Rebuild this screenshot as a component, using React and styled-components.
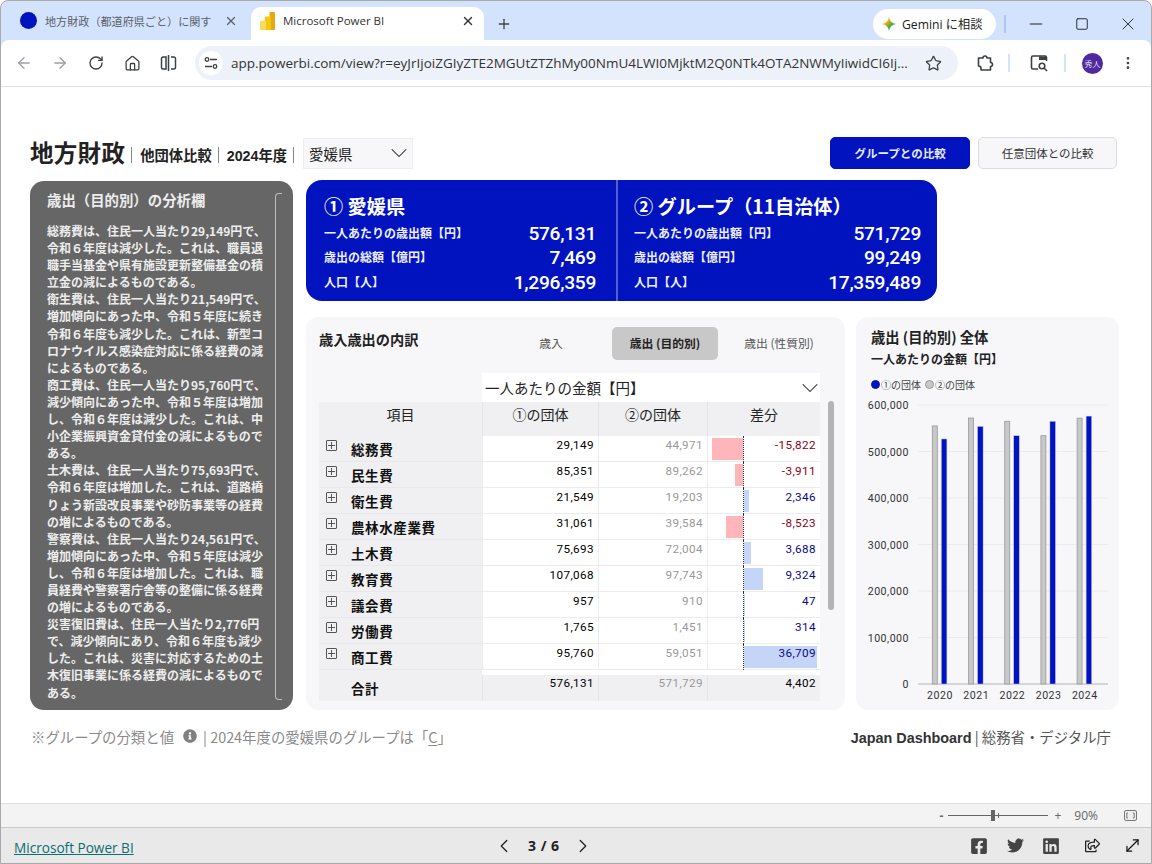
import React from "react"
import styled, { createGlobalStyle } from "styled-components"
import {
  ArrowLeft, ArrowRight, RotateCw, Home, Star, X, Plus, Minus, Square,
  ChevronDown, ChevronLeft, ChevronRight, MoveDiagonal, EllipsisVertical,
} from "lucide-react"
import { FaFacebookSquare, FaTwitter, FaLinkedin, FaRegShareSquare, FaInfoCircle } from "react-icons/fa"

const jp = `"Noto Sans CJK JP", sans-serif`
const num = `Roboto, "Noto Sans CJK JP", sans-serif`
const blue = "#0013be"

const GlobalStyle = createGlobalStyle`
  html, body { margin: 0; padding: 0; background: #fff; }
  * { box-sizing: border-box; }
  body { font-family: ${jp}; }
`

const analysis = [
  "総務費は、住民一人当たり29,149円で、", "令和６年度は減少した。これは、職員退", "職手当基金や県有施設更新整備基金の積", "立金の減によるものである。",
  "衛生費は、住民一人当たり21,549円で、", "増加傾向にあった中、令和５年度に続き", "令和６年度も減少した。これは、新型コ", "ロナウイルス感染症対応に係る経費の減", "によるものである。",
  "商工費は、住民一人当たり95,760円で、", "減少傾向にあった中、令和５年度は増加", "し、令和６年度は減少した。これは、中", "小企業振興資金貸付金の減によるもので", "ある。",
  "土木費は、住民一人当たり75,693円で、", "令和６年度は増加した。これは、道路橋", "りょう新設改良事業や砂防事業等の経費", "の増によるものである。",
  "警察費は、住民一人当たり24,561円で、", "増加傾向にあった中、令和５年度は減少", "し、令和６年度は増加した。これは、職", "員経費や警察署庁舎等の整備に係る経費", "の増によるものである。",
  "災害復旧費は、住民一人当たり2,776円", "で、減少傾向にあり、令和６年度も減少", "した。これは、災害に対応するための土", "木復旧事業に係る経費の減によるもので", "ある。",
]

const rows = [
  ["総務費", "29,149", "44,971", -15822],
  ["民生費", "85,351", "89,262", -3911],
  ["衛生費", "21,549", "19,203", 2346],
  ["農林水産業費", "31,061", "39,584", -8523],
  ["土木費", "75,693", "72,004", 3688],
  ["教育費", "107,068", "97,743", 9324],
  ["議会費", "957", "910", 47],
  ["労働費", "1,765", "1,451", 314],
  ["商工費", "95,760", "59,051", 36709],
]

const years = [
  [2020, 555000, 527000],
  [2021, 572000, 554000],
  [2022, 565000, 534000],
  [2023, 534000, 565000],
  [2024, 571729, 576131],
]

const Frame = styled.div`
  width: 1152px; height: 864px; display: flex; flex-direction: column; overflow: hidden;
  background: #d3e3fd; border: 1px solid #a9a9a9; border-radius: 8px 8px 0 0;
`
const TabStrip = styled.div`
  height: 39px; flex: none; display: flex; align-items: flex-end; padding-left: 7px;
`
const Tab = styled.div`
  height: 33px; display: flex; align-items: center; flex: none;
  width: ${p => p.$w}px; padding: 0 ${p => p.$active ? 9 : 13}px 6px ${p => p.$active ? 9 : 12}px;
  border-radius: 10px 10px 0 0; background: ${p => p.$active ? "#fff" : "transparent"};
  font-size: ${p => p.$active ? 11.5 : 11.1}px; color: ${p => p.$active ? "#333" : "#5a5f66"};
`
const TabDot = styled.span`
  width: 17px; height: 17px; border-radius: 50%; background: ${blue}; flex: none; margin-right: 8px;
`
const TabTitle = styled.span`
  flex: 1; white-space: nowrap; overflow: hidden; margin-left: ${p => p.$gap || 0}px; font-family: ${p => p.$latin ? `"Open Sans", sans-serif` : jp};
`
const NewTab = styled.span`
  margin: 0 0 8px 12px; color: #444; display: flex;
`
const TabEnd = styled.div`
  margin-left: auto; display: flex; align-items: center; height: 39px; padding-top: 6px; color: #222;
`
const GeminiPill = styled.div`
  width: 123px; height: 30px; border-radius: 15px; background: #fff; display: flex; align-items: center;
  gap: 6px; padding-left: 9px; font-size: 12.2px; color: #222; font-family: "Open Sans", ${jp};
`
const StripDivider = styled.span`
  width: 2px; height: 18px; background: #a9c7f5; margin: 0 7px 0 8px;
`
const WinButton = styled.span`
  width: 46px; display: flex; justify-content: center;
`
const Toolbar = styled.div`
  height: 47px; flex: none; background: #fff; border-radius: 8px 8px 0 0; border-bottom: 1px solid #dfe1e5;
  display: flex; align-items: center; padding-left: 5px;
`
const NavIcon = styled.span`
  width: 36px; display: flex; justify-content: center; flex: none; margin-left: ${p => p.$ml || 0}px;
  color: ${p => p.$off ? "#9aa0a6" : "#3c4043"};
`
const Omnibox = styled.div`
  width: 763px; height: 34px; margin: 0 9px 0 9px; border-radius: 17px; background: #edf2fa; flex: none;
  display: flex; align-items: center; padding: 0 16px 0 4px; font: 13.5px "Open Sans", sans-serif; color: #333;
`
const SiteChip = styled.span`
  width: 24px; height: 24px; border-radius: 50%; background: #fff; display: flex; align-items: center; justify-content: center; margin-right: 8px; flex: none;
`
const Url = styled.span`
  flex: 1; white-space: nowrap; overflow: hidden;
`
const ToolDivider = styled.span`
  width: 2px; height: 18px; background: #d3e3fd; flex: none; margin: 0 ${p => p.$m}px;
`
const Avatar = styled.span`
  width: 21px; height: 21px; border-radius: 50%; background: #4f2a9e; color: #e6e0f5; font-size: 8px; flex: none;
  display: flex; align-items: center; justify-content: center; margin: 0 17px 0 9px;
`

const Report = styled.main`
  flex: 1; background: #fff; padding: 50px 33px 0 29px; min-height: 0;
`
const ReportHead = styled.header`
  height: 32px; display: flex; align-items: center; margin-bottom: 11px;
`
const ReportTitle = styled.h1`
  margin: 0; font-size: 23.5px; font-weight: 700; color: #222; line-height: 1; letter-spacing: .3px;
`
const HeadSep = styled.span`
  width: 1px; height: 16px; background: #888; margin: 3px ${p => p.$r || 8}px 0 6px; flex: none;
`
const HeadLabel = styled.span`
  font-size: 14.3px; font-weight: 700; color: #222; margin-top: 3px; font-family: ${p => p.$num ? `"Liberation Sans", ${jp}` : jp};
`
const Select = styled.div`
  height: 31px; background: #f7f7fa; border: 1px solid #eeeef1; display: flex; align-items: center; justify-content: space-between;
  width: 110px; padding: 0 5px; font-size: 14.5px; color: #222;
`
const DropChevron = styled(ChevronDown)`
  flex: none; margin-right: ${p => p.$mr}px;
`
const HeadButton = styled.button`
  width: ${p => p.$w}px; height: 32px; border-radius: 5px; font: ${p => p.$on ? 700 : 400} 11.5px ${jp};
  margin-left: ${p => p.$ml}px; cursor: pointer;
  background: ${p => p.$on ? blue : "#f7f7fa"}; color: ${p => p.$on ? "#e8eaff" : "#333"};
  border: 1px solid ${p => p.$on ? blue : "#dcdcdc"};
`

const Columns = styled.div`
  display: grid; grid-template-columns: 263px 813px; column-gap: 13px;
`
const AnalysisPanel = styled.aside`
  height: 529px; margin-top: 1px; background: #666; border-radius: 14px; padding: 9px 17px; position: relative; color: #ededed;
`
const AnalysisTitle = styled.h2`
  margin: 0 0 12px; font-size: 14.4px; font-weight: 700; line-height: 20px; white-space: nowrap;
`
const AnalysisLine = styled.div`
  font-size: 12px; font-weight: 700; line-height: 17.1px; white-space: nowrap;
`
const PanelScroll = styled.span`
  position: absolute; left: 245px; top: 12px; bottom: 10px; width: 7px; border: 1px solid #bdbdbd; border-right: none; border-radius: 4px 0 0 4px;
`
const RightColumn = styled.div`
  display: flex; flex-direction: column; gap: 16px;
`
const SummaryCard = styled.section`
  width: 631px; height: 121px; border-radius: 16px; background: ${blue}; display: flex; color: #fff;
`
const SummaryPart = styled.div`
  width: ${p => p.$w}px; padding: 12px ${p => p.$r}px 0 ${p => p.$sep ? 16 : 18}px; border-left: ${p => p.$sep ? "2px solid #5560cf" : "none"};
`
const SummaryTitle = styled.h2`
  margin: 0; font-size: 19.2px; font-weight: 700; line-height: 29px; white-space: nowrap;
`
const SummaryRow = styled.div`
  height: 24.5px; display: flex; align-items: center; justify-content: space-between;
`
const SummaryLabel = styled.span`
  font-size: 12px; font-weight: 700; color: #eef; margin-top: -2px;
`
const SummaryValue = styled.span`
  font: 500 19.2px ${num}; letter-spacing: -.3px;
`
const LowerRow = styled.div`
  display: flex; gap: 11px;
`
const BreakdownPanel = styled.section`
  width: 539px; height: 393px; background: #f7f7fa; border-radius: 12px; padding: 10px 13px; position: relative;
`
const BreakdownHead = styled.div`
  display: flex; height: 33px; margin-bottom: 13px;
`
const PanelTitle = styled.h3`
  margin: 0; font-size: 14.2px; font-weight: 700; color: #222; line-height: 24px; width: 171px; flex: none; white-space: nowrap;
`
const TabButton = styled.div`
  height: 33px; display: flex; align-items: center; justify-content: center; width: ${p => p.$w}px; flex: none; padding-bottom: 2px;
  border-radius: 5px; font-size: 11.8px; color: ${p => p.$on ? "#222" : "#555"}; font-weight: ${p => p.$on ? 700 : 400};
  background: ${p => p.$on ? "#c8c8c8" : "transparent"}; white-space: nowrap;
`
const MeasureSelect = styled.div`
  margin-left: 163px; width: 338px; height: 29px; background: #fff; display: flex; align-items: center; justify-content: space-between;
  padding: 0 3px; font-size: 14.5px; color: #222;
`
const TableGrid = styled.div`
  display: grid; grid-template-columns: 163px 116px 109px 113px;
`
const HeadCell = styled.div`
  height: 34px; background: #f0f0f3; font-size: 14px; color: #222; text-align: center; line-height: 25px;
  border-left: ${p => p.$first ? "none" : "1px solid #e4e4e8"}; white-space: nowrap;
`
const LabelCell = styled.div`
  height: 26px; background: #f0f0f3; border-bottom: 1px solid #e8e8ec; display: flex; align-items: flex-start; padding-left: 7px;
`
const Expander = styled.span`
  width: 11px; height: 11px; border: 1px solid #555; border-radius: 1px; margin: 4px 14px 0 0; position: relative; flex: none;
  &::before { content: ""; position: absolute; left: 1px; right: 1px; top: 4px; height: 1px; background: #555; }
  &::after { content: ""; position: absolute; top: 1px; bottom: 1px; left: 4px; width: 1px; background: #555; }
`
const LabelText = styled.span`
  font-size: 13.5px; font-weight: 700; color: #111; line-height: ${p => p.$total ? 20 : 27}px; letter-spacing: .6px; white-space: nowrap;
`
const NumCell = styled.div`
  height: 26px; background: #fff; border-bottom: 1px solid #ececef; border-left: 1px solid #ececef; position: relative;
  text-align: right; padding-right: 4px; font: 400 11.7px/19px ${num}; letter-spacing: .4px;
  color: ${p => p.$tone || "#000"};
`
const DiffBar = styled.span`
  position: absolute; top: 2px; bottom: 1px; background: ${p => p.$neg ? "#ffb6bb" : "#c4d5f8"};
`
const ZeroLine = styled.span`
  position: absolute; left: 35px; top: 0; bottom: -1px; border-left: 1px dotted #333;
`
const DiffText = styled.span`
  position: relative;
`
const Gap = styled.div`
  grid-column: 2 / 5; height: 5px; background: #fff;
`
const GapLabel = styled.div`
  height: 5px; background: #f0f0f3;
`
const TotalLabel = styled.div`
  height: 26px; background: #f0f0f3; padding-left: 32px;
`
const TotalCell = styled(NumCell)`
  background: #f0f0f3; border-bottom: none; border-left: 1px solid #e6e6ea; line-height: 17px;
`
const ScrollThumb = styled.span`
  position: absolute; left: 522px; top: 84px; width: 6px; height: 209px; border-radius: 3px; background: #b4b4b4;
`
const ChartPanel = styled.section`
  width: 263px; height: 393px; background: #f7f7fa; border-radius: 12px; padding: 10px 15px 0;
`
const ChartTitle = styled.h3`
  margin: 0; font-size: 14.3px; font-weight: 700; color: #222; line-height: 20px; white-space: nowrap;
`
const ChartSub = styled.div`
  font-size: 12px; font-weight: 700; color: #222; line-height: 24px; white-space: nowrap;
`
const Legend = styled.div`
  display: flex; align-items: center; font-size: 10px; color: #444; margin-top: 5px; height: 16px;
`
const LegendDot = styled.span`
  width: 9px; height: 9px; border-radius: 50%; background: ${p => p.$c}; border: 1px solid ${p => p.$b}; margin: 0 1px 0 ${p => p.$ml || 0}px; flex: none;
`
const ChartSvg = styled.svg`
  display: block; margin: 0 0 0 -15px;
`
const Foot = styled.footer`
  display: flex; justify-content: space-between; align-items: center; margin-top: 15px; height: 22px; padding-left: 1px;
`
const FootNote = styled.div`
  display: flex; align-items: center; font-size: 14.4px; color: #8a8a8a; white-space: pre;
`
const NoteIcon = styled.span`
  display: flex; margin: 0 6px 0 9px; color: #808080;
`
const Underlined = styled.u`
  text-underline-offset: 2px;
`
const FootOwner = styled.div`
  font-size: 14.4px; color: #555; padding-right: 7px; white-space: nowrap;
`
const OwnerName = styled.b`
  font: 700 14.4px "Liberation Sans", sans-serif; color: #333;
`
const ZoomBar = styled.div`
  height: 24px; flex: none; background: #f3f3f3; border-top: 1px solid #dedede; display: flex; align-items: center; justify-content: flex-end;
  font: 12px "Open Sans", sans-serif; color: #666; padding-right: 14px;
`
const SliderTrack = styled.span`
  width: 100px; height: 1px; background: #666; position: relative; margin: 0 6px 0 5px;
`
const SliderThumb = styled.span`
  position: absolute; left: 43px; top: -5px; width: 4px; height: 11px; background: #666;
`
const SliderTick = styled.span`
  position: absolute; left: 50px; top: -2px; width: 1px; height: 5px; background: #666;
`
const ZoomText = styled.span`
  margin: 0 26px 0 13px;
`
const BottomBar = styled.div`
  height: 36px; flex: none; background: #e9e9e9; border-top: 1px solid #c8c8c8; display: grid; grid-template-columns: 479px auto 1fr; align-items: center;
  padding: 0 2px 0 13px;
`
const BrandLink = styled.a`
  font: 13.6px "Open Sans", sans-serif; color: #0b6f70; text-decoration: underline;
`
const Pager = styled.div`
  display: flex; align-items: center; gap: 13px; font: 700 14px "Open Sans", sans-serif; color: #222; word-spacing: 1px;
`
const ShareIcons = styled.div`
  display: flex; align-items: center; justify-content: flex-end; color: #444;
`
const ShareIcon = styled.span`
  width: ${p => p.$w || 36}px; display: flex; justify-content: center; color: ${p => p.$c || "#444"};
`

const PowerBiLogo = () => (
  <svg width="15" height="18" viewBox="0 0 15 18" style={{ flex: "none" }}>
    <rect x="9.5" y="0" width="5.5" height="18" rx="1" fill="#e8a80f" />
    <rect x="4.8" y="4.5" width="6" height="13.5" rx="1" fill="#f2c811" />
    <rect x="0" y="9" width="6" height="9" rx="1" fill="#f9dc5c" />
  </svg>
)

const GeminiIcon = () => (
  <svg width="14" height="14" viewBox="0 0 24 24" style={{ flex: "none" }}>
    <defs>
      <linearGradient id="gem" x1="0" y1="0" x2="1" y2="1">
        <stop offset="0" stopColor="#e8453c" />
        <stop offset=".35" stopColor="#f4b400" />
        <stop offset=".65" stopColor="#34a853" />
        <stop offset="1" stopColor="#4285f4" />
      </linearGradient>
    </defs>
    <path d="M12 0c1 7 5 11 12 12-7 1-11 5-12 12-1-7-5-11-12-12 7-1 11-5 12-12z" fill="url(#gem)" />
  </svg>
)

const TuneIcon = () => (
  <svg width="14" height="14" viewBox="0 0 14 14" fill="none" stroke="#3c4043" strokeWidth="1.3">
    <circle cx="3" cy="3.5" r="1.8" /><path d="M6 3.5h7" />
    <circle cx="11" cy="10.5" r="1.8" /><path d="M1 10.5h7" />
  </svg>
)

const SplitIcon = () => (
  <svg width="17" height="18" viewBox="0 0 17 18" fill="none" stroke="#3c4043" strokeWidth="1.5">
    <path d="M8.5 1v16" />
    <path d="M6 3H3a1.5 1.5 0 0 0-1.5 1.5v9A1.5 1.5 0 0 0 3 15h3z" />
    <path d="M11 3h3a1.5 1.5 0 0 1 1.5 1.5v9A1.5 1.5 0 0 1 14 15h-3" />
  </svg>
)

const ExtensionIcon = () => (
  <svg width="18" height="18" viewBox="0 0 18 18" fill="none" stroke="#3c4043" strokeWidth="1.6" strokeLinejoin="round">
    <path d="M2.5 4H7a2 2 0 1 1 4 0h3.5v4.5a2 2 0 1 1 0 4V16H5v-1.5a2.5 2.5 0 0 0-2.5-2.5z" />
  </svg>
)

const TabSearchIcon = () => (
  <svg width="18" height="18" viewBox="0 0 18 18" fill="none" stroke="#3c4043" strokeWidth="1.6">
    <path d="M8 15H3a1.5 1.5 0 0 1-1.5-1.5v-10A1.5 1.5 0 0 1 3 2h12a1.5 1.5 0 0 1 1.5 1.5V7" />
    <path d="M9 2.5h7V6H9z" fill="#3c4043" stroke="none" />
    <circle cx="12" cy="12" r="2.8" />
    <path d="M14 14l3 3" />
  </svg>
)

const FitIcon = () => (
  <svg width="13" height="11" viewBox="0 0 13 11" fill="none" stroke="#777" strokeWidth="1">
    <rect x=".5" y=".5" width="12" height="10" rx="1.5" fill="#eee" />
    <path d="M4 3H2.8v5H4M9 3h1.2v5H9" />
  </svg>
)

const barH = v => v * 279 / 600000

const BarChart = () => (
  <ChartSvg width="263" height="317" viewBox="855 392 263 317">
    {[0, 100000, 200000, 300000, 400000, 500000, 600000].map(v => (
      <g key={v}>
        <line x1="917" x2="1107" y1={684 - barH(v)} y2={684 - barH(v)} stroke={v ? "#ececf0" : "#b4b4b8"} strokeWidth="1" />
        <text x="908" y={688 - barH(v)} textAnchor="end" fontFamily="Roboto, sans-serif" fontSize="10.6" letterSpacing=".5" fill="#333">{v.toLocaleString("en-US")}</text>
      </g>
    ))}
    {years.map(([year, other, own], i) => {
      const x = 931.3 + i * 36.2
      return (
        <g key={year}>
          <rect x={x} y={684 - barH(other)} width="5" height={barH(other)} fill="#c8c8c8" stroke="#999" strokeWidth=".8" />
          <rect x={x + 9} y={684 - barH(own)} width="5.6" height={barH(own)} fill={blue} stroke="#c5cbf0" strokeWidth=".5" />
          <text x={x + 7.7} y="699" textAnchor="middle" fontFamily="Roboto, sans-serif" fontSize="10.6" letterSpacing=".5" fill="#333">{year}</text>
        </g>
      )
    })}
  </ChartSvg>
)

const Summary = ({ title, w, r, sep, values }) => (
  <SummaryPart $w={w} $r={r} $sep={sep}>
    <SummaryTitle>{title}</SummaryTitle>
    <SummaryRow><SummaryLabel>一人あたりの歳出額【円】</SummaryLabel><SummaryValue>{values[0]}</SummaryValue></SummaryRow>
    <SummaryRow><SummaryLabel>歳出の総額【億円】</SummaryLabel><SummaryValue>{values[1]}</SummaryValue></SummaryRow>
    <SummaryRow><SummaryLabel>人口【人】</SummaryLabel><SummaryValue>{values[2]}</SummaryValue></SummaryRow>
  </SummaryPart>
)

const App = () => {
  return (
    <Frame>
      <GlobalStyle />
      <TabStrip>
        <Tab $w={243}>
          <TabDot />
          <TabTitle>地方財政（都道府県ごと）に関す</TabTitle>
          <X size={14} strokeWidth={2.2} />
        </Tab>
        <Tab $w={233} $active>
          <PowerBiLogo />
          <TabTitle $latin $gap={8}>Microsoft Power BI</TabTitle>
          <X size={14} strokeWidth={2.4} />
        </Tab>
        <NewTab><Plus size={16} strokeWidth={2} /></NewTab>
        <TabEnd>
          <GeminiPill><GeminiIcon />Gemini に相談</GeminiPill>
          <StripDivider />
          <WinButton><Minus size={20} strokeWidth={1.2} /></WinButton>
          <WinButton><Square size={14} strokeWidth={1.6} /></WinButton>
          <WinButton><X size={20} strokeWidth={1.1} /></WinButton>
        </TabEnd>
      </TabStrip>
      <Toolbar>
        <NavIcon $off><ArrowLeft size={18} strokeWidth={1.7} /></NavIcon>
        <NavIcon $off><ArrowRight size={18} strokeWidth={1.7} /></NavIcon>
        <NavIcon><RotateCw size={16} strokeWidth={2} /></NavIcon>
        <NavIcon><Home size={17} strokeWidth={1.8} /></NavIcon>
        <NavIcon><SplitIcon /></NavIcon>
        <Omnibox>
          <SiteChip><TuneIcon /></SiteChip>
          <Url>app.powerbi.com/view?r=eyJrIjoiZGIyZTE2MGUtZTZhMy00NmU4LWI0MjktM2Q0NTk4OTA2NWMyIiwidCI6Ij...</Url>
          <Star size={17} strokeWidth={1.8} color="#3c4043" />
        </Omnibox>
        <NavIcon><ExtensionIcon /></NavIcon>
        <ToolDivider $m={5} />
        <NavIcon $ml={6}><TabSearchIcon /></NavIcon>
        <ToolDivider $m={7} />
        <Avatar>秀人</Avatar>
        <EllipsisVertical size={16} color="#3c4043" />
      </Toolbar>

      <Report>
        <ReportHead>
          <ReportTitle>地方財政</ReportTitle>
          <HeadSep />
          <HeadLabel>他団体比較</HeadLabel>
          <HeadSep />
          <HeadLabel $num>2024年度</HeadLabel>
          <HeadSep $r={9} />
          <Select>愛媛県<DropChevron size={28} strokeWidth={.9} $mr={-6} /></Select>
          <HeadButton $on $w={140} $ml={417}>グループとの比較</HeadButton>
          <HeadButton $w={139} $ml={8}>任意団体との比較</HeadButton>
        </ReportHead>

        <Columns>
          <AnalysisPanel>
            <AnalysisTitle>歳出（目的別）の分析欄</AnalysisTitle>
            {analysis.map((line, i) => <AnalysisLine key={i}>{line}</AnalysisLine>)}
            <PanelScroll />
          </AnalysisPanel>

          <RightColumn>
            <SummaryCard>
              <Summary title="① 愛媛県" w={310} r={20} values={["576,131", "7,469", "1,296,359"]} />
              <Summary title="② グループ（11自治体）" w={321} r={16} sep values={["571,729", "99,249", "17,359,489"]} />
            </SummaryCard>

            <LowerRow>
              <BreakdownPanel>
                <BreakdownHead>
                  <PanelTitle>歳入歳出の内訳</PanelTitle>
                  <TabButton $w={122}>歳入</TabButton>
                  <TabButton $w={106} $on>歳出 (目的別)</TabButton>
                  <TabButton $w={122}>歳出 (性質別)</TabButton>
                </BreakdownHead>
                <MeasureSelect>一人あたりの金額【円】<DropChevron size={28} strokeWidth={.9} $mr={-7} /></MeasureSelect>
                <TableGrid>
                  <HeadCell $first>項目</HeadCell>
                  <HeadCell>①の団体</HeadCell>
                  <HeadCell>②の団体</HeadCell>
                  <HeadCell>差分</HeadCell>
                  {rows.map(([label, own, other, diff]) => (
                    <React.Fragment key={label}>
                      <LabelCell><Expander /><LabelText>{label}</LabelText></LabelCell>
                      <NumCell>{own}</NumCell>
                      <NumCell $tone="#999">{other}</NumCell>
                      <NumCell $tone={diff < 0 ? "#8a0016" : "#0a0a80"}>
                        <DiffBar
                          $neg={diff < 0}
                          style={diff < 0
                            ? { right: 77, width: Math.abs(diff) * 0.00199 }
                            : { left: 36, width: diff * 0.00199 }}
                        />
                        <ZeroLine />
                        <DiffText>{diff.toLocaleString("en-US")}</DiffText>
                      </NumCell>
                    </React.Fragment>
                  ))}
                  <GapLabel />
                  <Gap />
                  <TotalLabel><LabelText $total>合計</LabelText></TotalLabel>
                  <TotalCell>576,131</TotalCell>
                  <TotalCell $tone="#999">571,729</TotalCell>
                  <TotalCell>4,402</TotalCell>
                </TableGrid>
                <ScrollThumb />
              </BreakdownPanel>

              <ChartPanel>
                <ChartTitle>歳出 (目的別) 全体</ChartTitle>
                <ChartSub>一人あたりの金額【円】</ChartSub>
                <Legend>
                  <LegendDot $c={blue} $b={blue} />①の団体
                  <LegendDot $c="#c8c8c8" $b="#999" $ml={4} />②の団体
                </Legend>
                <BarChart />
              </ChartPanel>
            </LowerRow>
          </RightColumn>
        </Columns>

        <Foot>
          <FootNote>
            ※グループの分類と値
            <NoteIcon><FaInfoCircle size={14} /></NoteIcon>
            {"| 2024年度の愛媛県のグループは「"}<Underlined>C</Underlined>」
          </FootNote>
          <FootOwner><OwnerName>Japan Dashboard</OwnerName> | 総務省・デジタル庁</FootOwner>
        </Foot>
      </Report>

      <ZoomBar>
        <b>-</b>
        <SliderTrack><SliderThumb /><SliderTick /></SliderTrack>
        +
        <ZoomText>90%</ZoomText>
        <FitIcon />
      </ZoomBar>
      <BottomBar>
        <span><BrandLink href="#">Microsoft Power BI</BrandLink></span>
        <Pager>
          <ChevronLeft size={22} strokeWidth={1.4} />
          <span>3 / 6</span>
          <ChevronRight size={22} strokeWidth={1.4} />
        </Pager>
        <ShareIcons>
          <ShareIcon><FaFacebookSquare size={18} /></ShareIcon>
          <ShareIcon><FaTwitter size={17} /></ShareIcon>
          <ShareIcon><FaLinkedin size={18} /></ShareIcon>
          <ShareIcon $w={46} $c="#222"><FaRegShareSquare size={15} /></ShareIcon>
          <ShareIcon $w={34} $c="#111"><MoveDiagonal size={19} strokeWidth={1.5} /></ShareIcon>
        </ShareIcons>
      </BottomBar>
    </Frame>
  )
}

export default App
